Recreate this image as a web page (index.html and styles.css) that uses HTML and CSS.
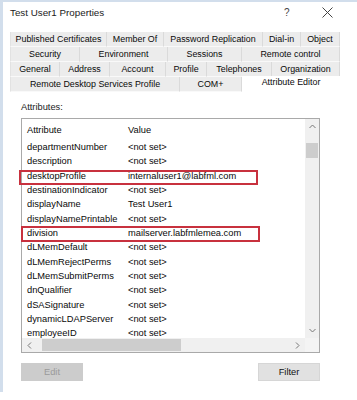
FILE: index.html
```html
<!DOCTYPE html>
<html lang="en">
<head>
    <meta charset="UTF-8">
    <meta name="viewport" content="width=device-width, initial-scale=1.0">
    <title>Test User1 Properties</title>
    <link rel="stylesheet" href="styles.css">
</head>
<body>
    <div class="window">
        <div class="titlebar">
            <span class="title">Test User1 Properties</span>
            <span class="help">?</span>
            <svg class="close" width="11" height="11" viewBox="0 0 11 11">
                <path d="M0.5 0.5 L10.5 10.5 M10.5 0.5 L0.5 10.5" stroke="#444" stroke-width="1" fill="none"/>
            </svg>
        </div>

        <div class="tabs">
            <div class="tab-row">
                <div class="tab" style="width:97px">Published Certificates</div>
                <div class="tab" style="width:57px">Member Of</div>
                <div class="tab" style="width:99px">Password Replication</div>
                <div class="tab" style="width:38px">Dial-in</div>
                <div class="tab" style="width:39px">Object</div>
            </div>
            <div class="tab-row">
                <div class="tab" style="width:70px">Security</div>
                <div class="tab" style="width:88px">Environment</div>
                <div class="tab" style="width:74px">Sessions</div>
                <div class="tab" style="width:98px">Remote control</div>
            </div>
            <div class="tab-row">
                <div class="tab" style="width:50px">General</div>
                <div class="tab" style="width:50px">Address</div>
                <div class="tab" style="width:56px">Account</div>
                <div class="tab" style="width:41px">Profile</div>
                <div class="tab" style="width:65px">Telephones</div>
                <div class="tab" style="width:68px">Organization</div>
            </div>
            <div class="tab-row">
                <div class="tab" style="width:170px">Remote Desktop Services Profile</div>
                <div class="tab" style="width:62px">COM+</div>
                <div class="tab active" style="width:98px">Attribute Editor</div>
            </div>
        </div>

        <div class="page">
            <div class="label">Attributes:</div>
            <div class="listbox">
                <div class="list-view">
                    <div class="row head"><span class="c1">Attribute</span><span class="c2">Value</span></div>
                    <div class="rows" id="rows"></div>
                </div>
                <div class="vscroll">
                    <svg class="arrow" width="7" height="5" viewBox="0 0 7 5"><path d="M0.5 4 L3.5 1 L6.5 4" stroke="#777" fill="none"/></svg>
                    <div class="vthumb"></div>
                    <div class="vspace"></div>
                    <svg class="arrow" width="7" height="5" viewBox="0 0 7 5"><path d="M0.5 1 L3.5 4 L6.5 1" stroke="#777" fill="none"/></svg>
                </div>
                <div class="hscroll">
                    <svg class="arrow" width="5" height="7" viewBox="0 0 5 7"><path d="M4 0.5 L1 3.5 L4 6.5" stroke="#777" fill="none"/></svg>
                    <div class="hthumb"></div>
                    <div class="hspace"></div>
                    <svg class="arrow" width="5" height="7" viewBox="0 0 5 7"><path d="M1 0.5 L4 3.5 L1 6.5" stroke="#777" fill="none"/></svg>
                </div>
                <div class="corner"></div>
                <div class="mark mark-desktop"></div>
                <div class="mark mark-division"></div>
            </div>
            <div class="buttons">
                <button class="btn disabled">Edit</button>
                <button class="btn">Filter</button>
            </div>
        </div>
    </div>

    <script>
        const attrs = [
            ['departmentNumber', '<not set>'],
            ['description', '<not set>'],
            ['desktopProfile', 'internaluser1@labfml.com'],
            ['destinationIndicator', '<not set>'],
            ['displayName', 'Test User1'],
            ['displayNamePrintable', '<not set>'],
            ['division', 'mailserver.labfmlemea.com'],
            ['dLMemDefault', '<not set>'],
            ['dLMemRejectPerms', '<not set>'],
            ['dLMemSubmitPerms', '<not set>'],
            ['dnQualifier', '<not set>'],
            ['dSASignature', '<not set>'],
            ['dynamicLDAPServer', '<not set>'],
            ['employeeID', '<not set>']
        ];

        const rows = document.getElementById('rows');
        attrs.forEach(a => {
            const row = document.createElement('div');
            row.className = 'row';
            const c1 = document.createElement('span');
            c1.className = 'c1';
            c1.textContent = a[0];
            const c2 = document.createElement('span');
            c2.className = 'c2';
            c2.textContent = a[1];
            row.appendChild(c1);
            row.appendChild(c2);
            rows.appendChild(row);
        });
    </script>
</body>
</html>
```

FILE: styles.css
```css
body {
    margin: 0;
    padding: 0;
    background: #fff;
    font-family: "Liberation Sans", Arial, sans-serif;
    color: #111;
}
.window {
    width: 357px;
    height: 392px;
    box-sizing: border-box;
    border-left: 3px solid #d2deec;
    border-top: 2px solid #d2deec;
    background: #fff;
}
.titlebar {
    height: 20px;
    display: flex;
    align-items: center;
    padding-left: 7px;
}
.title {
    font-size: 9.8px;
    color: #222;
    flex: 1;
}
.help {
    font-size: 10px;
    color: #444;
    width: 12px;
    margin-right: 26px;
}
.close {
    margin-right: 24px;
}
.tabs {
    margin: 10px 0 0 7px;
    width: 330px;
}
.tab-row {
    display: flex;
    height: 15px;
}
.tab {
    box-sizing: border-box;
    background: #ececec;
    border-right: 1px solid #dadada;
    border-bottom: 1px solid #f9f9f9;
    font-size: 8.9px;
    line-height: 14px;
    text-align: center;
    white-space: nowrap;
    color: #0a0a0a;
}
.tab:first-child {
    border-left: 1px solid #e2e2e2;
}
.tab.active {
    background: #fff;
    border: none;
    margin-top: -1px;
    height: 16px;
    line-height: 13px;
}
.page {
    padding-left: 18px;
}
.label {
    font-size: 9.3px;
    line-height: 12px;
    margin-top: 9px;
    color: #222;
}
.listbox {
    position: relative;
    margin-top: 5px;
    width: 299px;
    height: 235px;
    box-sizing: border-box;
    border: 1px solid #a9a9a9;
    display: grid;
    grid-template-columns: 283px 14px;
    grid-template-rows: 219px 14px;
}
.list-view {
    overflow: hidden;
}
.row {
    display: flex;
    height: 14.33px;
    align-items: center;
    font-size: 9.3px;
    white-space: nowrap;
    color: #0a0a0a;
}
.row.head {
    height: 21px;
}
.c1 {
    width: 101px;
    padding-left: 5px;
}
.rows {
    height: 198px;
    overflow: hidden;
}
.vscroll {
    background: #f0f0f0;
    display: flex;
    flex-direction: column;
    align-items: center;
}
.vscroll .arrow {
    margin: 5px 0;
}
.vthumb {
    width: 12px;
    height: 15px;
    margin-top: 9px;
    background: #cdcdcd;
}
.vspace, .hspace {
    flex: 1;
}
.hscroll {
    background: #f0f0f0;
    display: flex;
    align-items: center;
}
.hscroll .arrow {
    margin: 0 5px;
}
.hscroll .arrow:first-child {
    margin-right: 10px;
}
.hthumb {
    width: 139px;
    height: 12px;
    background: #cdcdcd;
}
.corner {
    background: #f4f4f4;
}
.mark {
    position: absolute;
    box-sizing: border-box;
    border: 2px solid #c8313e;
    width: 239px;
}
.mark-desktop {
    left: -3px;
    top: 51px;
    height: 15px;
}
.mark-division {
    left: -1px;
    top: 107px;
    height: 16px;
}
.buttons {
    display: flex;
    justify-content: space-between;
    width: 299px;
    margin-top: 10px;
}
.btn {
    width: 62px;
    height: 18px;
    font-family: "Liberation Sans", Arial, sans-serif;
    font-size: 9.3px;
    background: #e1e1e1;
    border: 1px solid #d6d6d6;
    color: #111;
    padding: 0;
}
.btn.disabled {
    background: #cccccc;
    border-color: #cccccc;
    color: #9a9a9a;
}
```
